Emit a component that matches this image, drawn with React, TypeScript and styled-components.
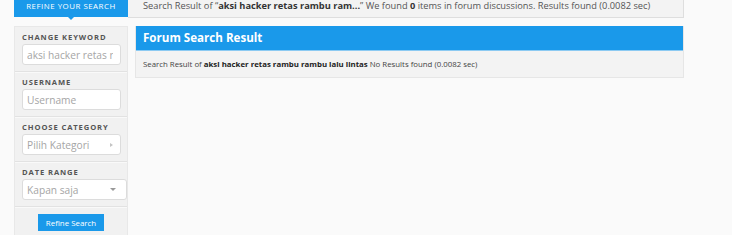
import styled, { createGlobalStyle } from 'styled-components';

const blue = '#1a99ea';

const GlobalStyle = createGlobalStyle`
  html, body {
    margin: 0;
    padding: 0;
    background: #fafafa;
    font-family: "Open Sans", "Liberation Sans", sans-serif;
  }
`;

export default function App() {
  return (
    <>
      <GlobalStyle />
      <Page>
        <TopRow>
          <RefineTab>Refine Your Search</RefineTab>
          <SummaryBar>
            Search Result of “<b>aksi hacker retas rambu ram...</b>” We found <b>0</b> items in
            forum discussions. Results found (0.0082 sec)
          </SummaryBar>
        </TopRow>
        <Body>
          <Sidebar>
            <FilterGroup>
              <FilterLabel>Change Keyword</FilterLabel>
              <Field $width={99}>
                <FieldText>aksi hacker retas rambu rambu lalu lintas</FieldText>
              </Field>
            </FilterGroup>
            <FilterGroup>
              <FilterLabel>Username</FilterLabel>
              <Field $width={99}>
                <FieldText>Username</FieldText>
              </Field>
            </FilterGroup>
            <FilterGroup>
              <FilterLabel>Choose Category</FilterLabel>
              <Field $width={99}>
                <FieldText>Pilih Kategori</FieldText>
                <Caret $dir="right" />
              </Field>
            </FilterGroup>
            <FilterGroup>
              <FilterLabel>Date Range</FilterLabel>
              <Field $width={105}>
                <FieldText>Kapan saja</FieldText>
                <Caret $dir="down" />
              </Field>
            </FilterGroup>
            <ButtonRow>
              <RefineButton>Refine Search</RefineButton>
            </ButtonRow>
          </Sidebar>
          <ResultPanel>
            <PanelHeader>Forum Search Result</PanelHeader>
            <PanelBody>
              Search Result of <b>aksi hacker retas rambu rambu lalu lintas</b> No Results found
              (0.0082 sec)
            </PanelBody>
          </ResultPanel>
        </Body>
      </Page>
    </>
  );
}

const Page = styled.div`
  width: 670px;
  padding-left: 14px;
  height: 235px;
  overflow: hidden;
`;

const TopRow = styled.div`
  display: flex;
  height: 18px;
  margin-bottom: 8px;
`;

const RefineTab = styled.div`
  position: relative;
  width: 114px;
  height: 17px;
  background: ${blue};
  color: #fff;
  font-size: 7.9px;
  text-transform: uppercase;
  letter-spacing: 0.5px;
  line-height: 13px;
  text-align: center;

  &::after {
    content: '';
    position: absolute;
    left: 54px;
    top: 17px;
    border-left: 3px solid transparent;
    border-right: 3px solid transparent;
    border-top: 3px solid ${blue};
  }
`;

const SummaryBar = styled.div`
  flex: 1;
  box-sizing: border-box;
  height: 18px;
  background: #f3f3f3;
  border-bottom: 1px solid #dedede;
  border-right: 1px solid #dedede;
  padding-left: 15px;
  font-size: 9.27px;
  line-height: 12px;
  color: #555;
  white-space: nowrap;

  b {
    color: #333;
  }
`;

const Body = styled.div`
  display: flex;
  align-items: flex-start;
  gap: 7px;
`;

const Sidebar = styled.aside`
  box-sizing: border-box;
  width: 114px;
  height: 220px;
  background: #f1f1f1;
  border: 1px solid #e8e8e8;
  border-bottom: none;
`;

const FilterGroup = styled.div`
  padding: 5px 0 6px 7px;
  border-bottom: 1px solid #e2e2e2;
  box-shadow: 0 1px 0 #f9f9f9;
`;

const FilterLabel = styled.div`
  font-size: 7.6px;
  font-weight: 700;
  letter-spacing: 0.9px;
  text-transform: uppercase;
  color: #555;
  line-height: 10px;
  margin-bottom: 2px;
`;

const Field = styled.div<{ $width: number }>`
  box-sizing: border-box;
  display: flex;
  align-items: center;
  width: ${(p) => p.$width}px;
  height: 21px;
  padding: 0 7px 0 4px;
  background: #fff;
  border: 1px solid #dcdcdc;
  border-radius: 3px;
  overflow: hidden;
`;

const FieldText = styled.span`
  flex: 1;
  font-size: 10.2px;
  color: #a5a5a5;
  white-space: nowrap;
  overflow: hidden;
`;

const Caret = styled.span<{ $dir: 'right' | 'down' }>`
  width: 0;
  height: 0;
  flex: none;
  ${(p) =>
    p.$dir === 'right'
      ? `border-top: 2.5px solid transparent;
         border-bottom: 2.5px solid transparent;
         border-left: 3px solid #c4c4c4;`
      : `border-left: 3px solid transparent;
         border-right: 3px solid transparent;
         border-top: 3px solid #999;
         margin-right: 3px;`}
`;

const ButtonRow = styled.div`
  display: flex;
  justify-content: center;
  padding-top: 7px;
`;

const RefineButton = styled.button`
  width: 66px;
  height: 17px;
  padding: 0;
  border: none;
  background: ${blue};
  color: #fff;
  font-family: "Open Sans", "Liberation Sans", sans-serif;
  font-size: 7.9px;
  cursor: pointer;
`;

const ResultPanel = styled.section`
  flex: 1;
  box-sizing: border-box;
  border: 1px solid #e6e6e6;
  border-top: none;
  background: #f3f3f3;
`;

const PanelHeader = styled.h2`
  margin: 0;
  height: 25px;
  box-sizing: border-box;
  padding-left: 7px;
  background: ${blue};
  border-bottom: 1px solid #8ccaf2;
  color: #fff;
  font-size: 11.6px;
  font-weight: 700;
  line-height: 24px;
`;

const PanelBody = styled.div`
  height: 26px;
  padding-left: 7px;
  font-size: 7.83px;
  line-height: 26px;
  color: #444;
  white-space: nowrap;

  b {
    color: #222;
  }
`;
